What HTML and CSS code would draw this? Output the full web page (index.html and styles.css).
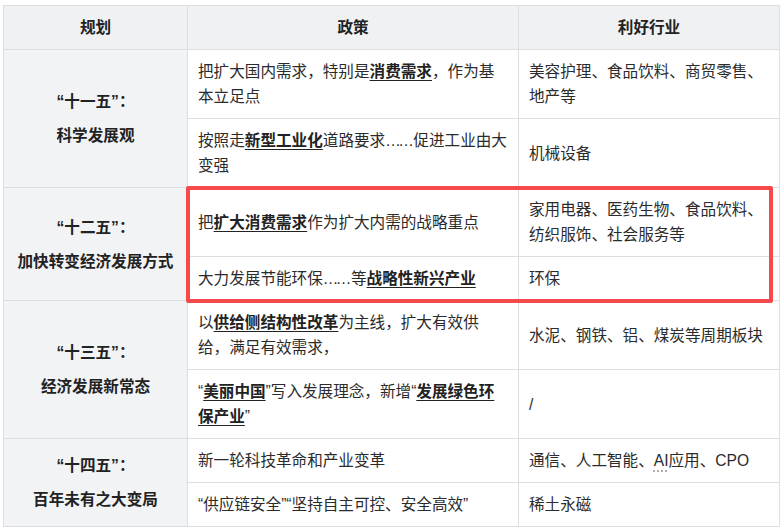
FILE: index.html
```html
<!DOCTYPE html>
<html lang="zh-CN">

<head>
  <meta charset="UTF-8">
  <meta name="viewport" content="width=device-width, initial-scale=1.0">
  <title>规划与利好行业</title>
  <link rel="stylesheet" href="styles.css">
</head>

<body>
  <div id="wrap">
    <table id="plan">
      <colgroup>
        <col class="c-plan">
        <col class="c-policy">
        <col class="c-industry">
      </colgroup>
      <thead>
        <tr>
          <th>规划</th>
          <th>政策</th>
          <th>利好行业</th>
        </tr>
      </thead>
      <tbody>
        <tr>
          <td class="name" rowspan="2">
            <p>“十一五”：</p>
            <p>科学发展观</p>
          </td>
          <td>把扩大国内需求，特别是<b>消费需求</b>，作为基本立足点</td>
          <td>美容护理、食品饮料、商贸零售、地产等</td>
        </tr>
        <tr>
          <td>按照走<b>新型工业化</b>道路要求<span class="dots">……</span>促进工业由大变强</td>
          <td>机械设备</td>
        </tr>
        <tr>
          <td class="name" rowspan="2">
            <p>“十二五”：</p>
            <p>加快转变经济发展方式</p>
          </td>
          <td>把<b>扩大消费需求</b>作为扩大内需的战略重点</td>
          <td>家用电器、医药生物、食品饮料、纺织服饰、社会服务等</td>
        </tr>
        <tr>
          <td>大力发展节能环保<span class="dots">……</span>等<b>战略性新兴产业</b></td>
          <td>环保</td>
        </tr>
        <tr>
          <td class="name" rowspan="2">
            <p>“十三五”：</p>
            <p>经济发展新常态</p>
          </td>
          <td>以<b>供给侧结构性改革</b>为主线，扩大有效供给，满足有效需求，</td>
          <td>水泥、钢铁、铝、煤炭等周期板块</td>
        </tr>
        <tr>
          <td>“<b>美丽中国</b>”写入发展理念，新增“<b>发展绿色环保产业</b>”</td>
          <td>/</td>
        </tr>
        <tr>
          <td class="name" rowspan="2">
            <p>“十四五”：</p>
            <p>百年未有之大变局</p>
          </td>
          <td>新一轮科技革命和产业变革</td>
          <td>通信、人工智能、<span class="term">AI</span>应用、CPO</td>
        </tr>
        <tr>
          <td>“供应链安全”“坚持自主可控、安全高效”</td>
          <td>稀土永磁</td>
        </tr>
      </tbody>
    </table>
    <div class="mark"></div>
  </div>
</body>

</html>
```

FILE: styles.css
```css
* {
  margin: 0;
  padding: 0;
}

body {
  font-family: "Liberation Sans", "Noto Sans CJK SC", sans-serif;
  font-size: 15.6px;
  color: #2b2b2b;
  background: #fff;
}

#wrap {
  position: relative;
  margin: 5px 0 0 3px;
  width: 776px;
}

#plan {
  width: 776px;
  table-layout: fixed;
  border-collapse: collapse;
  border: 1px solid #dcdee2;
}

.c-plan {
  width: 184px;
}

.c-policy {
  width: 331px;
}

.c-industry {
  width: 261px;
}

#plan th,
#plan td {
  border: 1px solid #dcdee2;
  padding: 9px 10px;
  line-height: 25px;
  vertical-align: middle;
  text-align: left;
}

#plan th {
  background: #f0f1f3;
  font-weight: 600;
  text-align: center;
  color: #222;
}

#plan td.name {
  background: #f2f3f5;
  text-align: center;
  font-weight: bold;
  color: #222;
}

#plan td.name p + p {
  margin-top: 9px;
}

#plan b {
  font-weight: bold;
  color: #222;
  text-decoration: underline;
  text-decoration-thickness: 1px;
  text-underline-offset: 3px;
}

.dots {
  letter-spacing: -2.5px;
  margin-right: 2px;
}

.term {
  text-decoration: underline dotted #999;
  text-underline-offset: 5px;
}

.mark {
  position: absolute;
  left: 183px;
  top: 181px;
  width: 587px;
  height: 117px;
  box-sizing: border-box;
  border: 4px solid #f5494b;
  border-radius: 2px;
}
```
